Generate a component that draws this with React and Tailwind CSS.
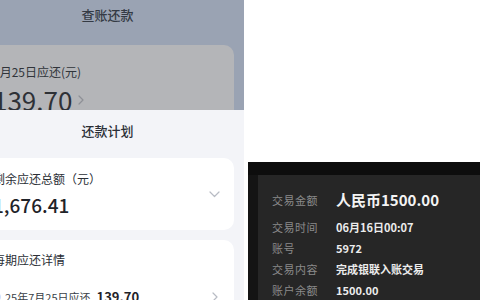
import React from "react";

const F = { fontFamily: '"Noto Sans CJK SC", "Noto Sans", sans-serif' };

function ChevronDown() {
  return (
    <svg width="11" height="7" viewBox="0 0 11 7" fill="none">
      <path d="M1 1l4.5 4.5L10 1" stroke="#b8bcc4" strokeWidth="1.2" strokeLinecap="round" strokeLinejoin="round" />
    </svg>
  );
}
function ChevronRight({ color = "#b8bcc4" }) {
  return (
    <svg width="6" height="10" viewBox="0 0 6 10" fill="none">
      <path d="M1 1l4 4-4 4" stroke={color} strokeWidth="1.2" strokeLinecap="round" strokeLinejoin="round" />
    </svg>
  );
}

function Row({ label, value, big }) {
  return (
    <div className="flex items-center">
      <div className="w-[64px] shrink-0 text-[11px] text-[#8a8a8a] tracking-[0.5px]">{label}</div>
      <div className={big ? "text-[15px] font-bold text-[#f4f4f4]" : "text-[11px] font-semibold text-[#ececec]"}>{value}</div>
    </div>
  );
}

export default function App() {
  return (
    <div className="w-[480px] h-[300px] flex overflow-hidden bg-white" style={F}>
      {/* Left phone screenshot */}
      <div className="w-[244px] h-full overflow-hidden shrink-0">
        <div className="w-[273px] -ml-[29px] h-full flex flex-col">
          <div className="h-[110px] shrink-0 bg-[#9aa3b3] flex flex-col overflow-hidden">
            <div className="h-[29px] shrink-0 flex items-center justify-center text-[13px] font-medium text-[#343a44]">查账还款</div>
            <div className="mx-[10px] mt-[16px] h-[100px] shrink-0 rounded-[10px] bg-[#b4b5b8] px-[12px] pt-[19px]">
              <div className="text-[12px] text-[#30343a] leading-[16px]">7月25日应还(元)</div>
              <div className="flex items-center gap-[6px] mt-[3px]">
                <span className="text-[26px] leading-[34px] text-[#2e3136]">139.70</span>
                <ChevronRight color="#8e9096" />
              </div>
            </div>
          </div>
          <div className="flex-1 bg-[#f3f4f8] flex flex-col">
            <div className="h-[42px] shrink-0 flex items-center justify-center text-[13px] font-medium text-[#2b2f36]">还款计划</div>
            <div className="mx-[10px] mt-[6px] h-[72px] shrink-0 rounded-[10px] bg-white px-[12px] flex items-center justify-between">
              <div className="flex flex-col">
                <div className="text-[12px] leading-[18px] text-[#2b2f36]">剩余应还总额（元）</div>
                <div className="text-[19px] leading-[26px] font-medium text-[#1f2329] mt-[4px]">1,676.41</div>
              </div>
              <div className="mr-[2px]"><ChevronDown /></div>
            </div>
            <div className="mx-[10px] mt-[10px] flex-1 rounded-t-[10px] bg-white px-[12px] pt-[12px] flex flex-col">
              <div className="text-[12px] leading-[16px] text-[#2b2f36]">每期应还详情</div>
              <div className="mt-[19px] flex items-center justify-between">
                <div className="flex items-center">
                  <span className="w-[10px] h-[10px] rounded-full bg-[#3b7cf2] border-[2px] border-[#cfe0fd] mr-[4px] ml-[-2px]" />
                  <span className="text-[11px] text-[#3a3f47]">25年7月25日应还</span>
                  <span className="ml-[6px] text-[13px] font-bold text-[#1f2329]">139.70</span>
                </div>
                <div className="mr-[4px]"><ChevronRight /></div>
              </div>
            </div>
          </div>
        </div>
      </div>
      {/* Right side */}
      <div className="flex-1 flex flex-col bg-white">
        <div className="h-[162px] shrink-0" />
        <div className="flex-1 ml-[4px] flex flex-col bg-[#0f0f0f]">
          <div className="h-[13px] shrink-0 bg-[#0d0d0d]" />
          <div className="flex-1 flex">
            <div className="w-[10px] shrink-0 bg-[#141414]" />
            <div className="flex-1 bg-[#262626] pl-[14px] pt-[14px] flex flex-col gap-[5px]">
              <div className="h-[22px] flex items-center"><Row label="交易金额" value="人民币1500.00" big /></div>
              <div className="h-[16px] mt-[3px] flex items-center"><Row label="交易时间" value="06月16日00:07" /></div>
              <div className="h-[16px] flex items-center"><Row label="账号" value="5972" /></div>
              <div className="h-[16px] flex items-center"><Row label="交易内容" value="完成银联入账交易" /></div>
              <div className="h-[16px] flex items-center"><Row label="账户余额" value="1500.00" /></div>
            </div>
          </div>
        </div>
      </div>
    </div>
  );
}
